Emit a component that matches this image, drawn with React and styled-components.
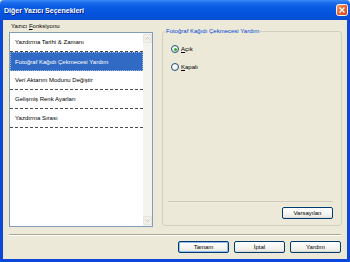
import React from "react";
import styled, { createGlobalStyle, css } from "styled-components";

const Global = createGlobalStyle`
  html, body { margin: 0; padding: 0; background: #ECE9D8; }
  body { font-family: "Liberation Sans", Arial, sans-serif; }
  * { box-sizing: border-box; }
`;

const Window = styled.div`
  width: 350px;
  height: 262px;
  display: flex;
  flex-direction: column;
  overflow: hidden;
  font-family: "Liberation Sans", Arial, sans-serif;
  font-size: 6px;
  color: #000;
`;

const TitleBar = styled.div`
  height: 20px;
  flex: none;
  display: flex;
  align-items: center;
  justify-content: space-between;
  padding: 0 2px 0 4px;
  background: linear-gradient(
    #3D8DF7 0%,
    #1F6FEE 12%,
    #0A5BE4 35%,
    #0553DE 70%,
    #0A4CD2 100%
  );
  border-top-left-radius: 4px;
  border-top-right-radius: 4px;
`;

const Title = styled.span`
  color: #fff;
  font-weight: bold;
  font-size: 7px;
  text-shadow: 1px 1px 0 #0A1E8C;
`;

const CloseIcon = styled.svg`
  display: block;
  flex: none;
`;

const Frame = styled.div`
  flex: 1;
  display: flex;
  flex-direction: column;
  background: #ECE9D8;
  border-left: 3px solid #0B47D8;
  border-right: 3px solid #0B47D8;
  border-bottom: 3px solid #0B47D8;
  padding: 0 5px 6px 6px;
`;

const Main = styled.div`
  display: grid;
  grid-template-columns: 144px 180px;
  column-gap: 9px;
  height: 207px;
`;

const LeftCol = styled.div`
  display: flex;
  flex-direction: column;
`;

const FieldLabel = styled.div`
  height: 12px;
  display: flex;
  align-items: center;
  padding-left: 2px;
`;

const U = styled.span`
  text-decoration: underline;
`;

const ListBox = styled.div`
  height: 195px;
  border: 1px solid #7F9DB9;
  background: #fff;
  display: flex;
`;

const Items = styled.div`
  flex: 1;
  display: flex;
  flex-direction: column;
`;

const Item = styled.div`
  height: 19px;
  flex: none;
  display: flex;
  align-items: center;
  padding-left: 5px;
  border-bottom: 1px dashed #4A4A4A;
  white-space: nowrap;
  ${(p) =>
    p.$selected &&
    css`
      background: #316AC5;
      color: #fff;
      border: 1px dotted #9DB4DE;
      padding-left: 4px;
    `}
`;

const ScrollBar = styled.div`
  width: 9px;
  flex: none;
  background: #F4F3EE;
  display: flex;
  flex-direction: column;
  justify-content: space-between;
  padding: 1px 0;
`;

const ScrollArrow = styled.div`
  height: 9px;
  border: 1px solid #E8E6DC;
  border-radius: 1px;
  background: #F1F0E8;
  display: flex;
  align-items: center;
  justify-content: center;
`;

const GroupBox = styled.div`
  position: relative;
  margin-top: 11px;
  height: 195px;
  border: 1px solid #D0D0BF;
  border-radius: 3px;
  display: flex;
  flex-direction: column;
  padding: 6px 8px 6px 5px;
`;

const Legend = styled.span`
  position: absolute;
  top: -4px;
  left: 2px;
  padding: 0 1px;
  background: #ECE9D8;
  color: #0046D5;
  font-size: 6px;
  line-height: 7px;
  white-space: nowrap;
`;

const InnerPanel = styled.div`
  flex: 1;
  border-bottom: 1px solid #D0CDBE;
  display: flex;
  flex-direction: column;
  gap: 6px;
  padding: 5px 0 0 3px;
`;

const RadioRow = styled.label`
  height: 12px;
  display: flex;
  align-items: center;
  gap: 2px;
`;

const RadioCircle = styled.span`
  width: 8px;
  height: 8px;
  border-radius: 50%;
  border: 1px solid #1C5180;
  background: radial-gradient(circle at 35% 35%, #fff 0%, #F0EFE7 60%, #D9D6C8 100%);
  display: flex;
  align-items: center;
  justify-content: center;
  flex: none;
  &::after {
    content: "";
    width: 3px;
    height: 3px;
    border-radius: 50%;
    background: ${(p) => (p.$checked ? "#2BAE2B" : "transparent")};
  }
`;

const ButtonRow = styled.div`
  display: flex;
  justify-content: flex-end;
  gap: 5px;
  margin-top: ${(p) => p.$top || 0}px;
  margin-right: ${(p) => p.$right || 0}px;
`;

const Button = styled.div`
  width: 51px;
  height: 12px;
  border: 1px solid #003C74;
  border-radius: 2px;
  background: linear-gradient(#FFFFFF 0%, #F7F7F4 50%, #ECEBE4 85%, #D6D0C5 100%);
  display: flex;
  align-items: center;
  justify-content: center;
  white-space: nowrap;
  ${(p) =>
    p.$default &&
    css`
      box-shadow: inset 0 0 0 1px #98B9EE;
    `}
`;

const Separator = styled.div`
  margin-top: 7px;
  margin-right: 1px;
  height: 2px;
  border-top: 1px solid #ACA899;
  border-bottom: 1px solid #fff;
`;

export default function App() {
  const items = [
    "Yazdırma Tarihi & Zamanı",
    "Fotoğraf Kağıdı Çekmecesi Yardım",
    "Veri Aktarım Modunu Değiştir",
    "Gelişmiş Renk Ayarları",
    "Yazdırma Sırası",
  ];
  return (
    <>
      <Global />
      <Window>
        <TitleBar>
          <Title>Diğer Yazıcı Seçenekleri</Title>
          <CloseIcon width="12" height="12" viewBox="0 0 12 12">
            <defs>
              <linearGradient id="cg" x1="0" y1="0" x2="1" y2="1">
                <stop offset="0" stopColor="#F7A27C" />
                <stop offset="0.45" stopColor="#E8652F" />
                <stop offset="1" stopColor="#D44C1C" />
              </linearGradient>
            </defs>
            <rect x="0.5" y="0.5" width="11" height="11" rx="2" fill="url(#cg)" stroke="#F2F2F2" />
            <path d="M3.5 3.5 L8.5 8.5 M8.5 3.5 L3.5 8.5" stroke="#fff" strokeWidth="1.3" />
          </CloseIcon>
        </TitleBar>
        <Frame>
          <Main>
            <LeftCol>
              <FieldLabel>
                Yazıcı&nbsp;<U>F</U>onksiyonu
              </FieldLabel>
              <ListBox>
                <Items>
                  {items.map((t, i) => (
                    <Item key={t} $selected={i === 1}>
                      {t}
                    </Item>
                  ))}
                </Items>
                <ScrollBar>
                  <ScrollArrow>
                    <svg width="5" height="3" viewBox="0 0 5 3">
                      <path d="M0.5 2.5 L2.5 0.5 L4.5 2.5" stroke="#C9C7BA" fill="none" strokeWidth="1" />
                    </svg>
                  </ScrollArrow>
                  <ScrollArrow>
                    <svg width="5" height="3" viewBox="0 0 5 3">
                      <path d="M0.5 0.5 L2.5 2.5 L4.5 0.5" stroke="#C9C7BA" fill="none" strokeWidth="1" />
                    </svg>
                  </ScrollArrow>
                </ScrollBar>
              </ListBox>
            </LeftCol>
            <GroupBox>
              <Legend>Fotoğraf Kağıdı Çekmecesi Yardım</Legend>
              <InnerPanel>
                <RadioRow>
                  <RadioCircle $checked />
                  <span>
                    <U>A</U>çık
                  </span>
                </RadioRow>
                <RadioRow>
                  <RadioCircle />
                  <span>
                    <U>K</U>apalı
                  </span>
                </RadioRow>
              </InnerPanel>
              <ButtonRow $top={5}>
                <Button>Varsayılan</Button>
              </ButtonRow>
            </GroupBox>
          </Main>
          <Separator />
          <ButtonRow $top={5} $right={1}>
            <Button $default>Tamam</Button>
            <Button>İptal</Button>
            <Button>Yardım</Button>
          </ButtonRow>
        </Frame>
      </Window>
    </>
  );
}
